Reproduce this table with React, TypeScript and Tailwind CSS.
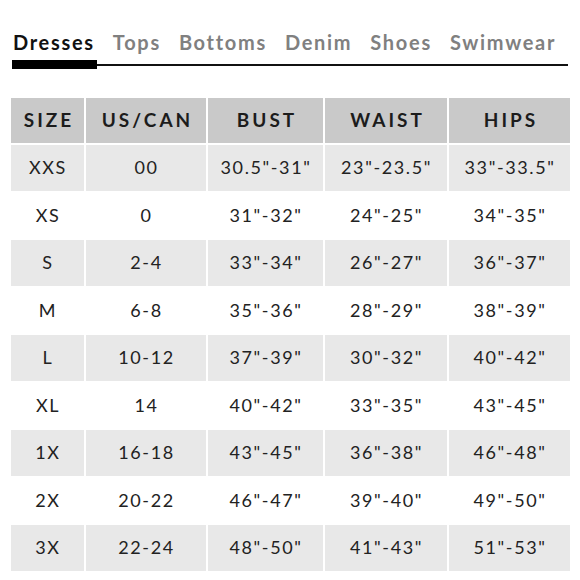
const tabs = ['Dresses', 'Tops', 'Bottoms', 'Denim', 'Shoes', 'Swimwear']

const headers = ['SIZE', 'US/CAN', 'BUST', 'WAIST', 'HIPS']

const rows = [
  ['XXS', '00', '30.5"-31"', '23"-23.5"', '33"-33.5"'],
  ['XS', '0', '31"-32"', '24"-25"', '34"-35"'],
  ['S', '2-4', '33"-34"', '26"-27"', '36"-37"'],
  ['M', '6-8', '35"-36"', '28"-29"', '38"-39"'],
  ['L', '10-12', '37"-39"', '30"-32"', '40"-42"'],
  ['XL', '14', '40"-42"', '33"-35"', '43"-45"'],
  ['1X', '16-18', '43"-45"', '36"-38"', '46"-48"'],
  ['2X', '20-22', '46"-47"', '39"-40"', '49"-50"'],
  ['3X', '22-24', '48"-50"', '41"-43"', '51"-53"'],
]

export default function App() {
  return (
    <div className="w-[580px] h-[580px] bg-white overflow-hidden font-['Lato','Liberation_Sans',sans-serif] text-[#222]">
      <div className="pl-[12px] pr-[12px] pt-[30px]">
        <div className="flex gap-[18px] text-[20px] font-bold leading-[24px] tracking-[1.7px] pl-[1px]">
          {tabs.map((t, i) => (
            <span key={t} className={i === 0 ? 'text-[#111]' : 'text-[#808080]'}>
              {t}
            </span>
          ))}
        </div>
        <div className="flex items-center mt-[6px]">
          <div className="w-[85px] h-[9px] bg-black" />
          <div className="flex-1 h-[2px] bg-[#111]" />
        </div>
      </div>

      <div className="ml-[11px] mt-[29px] grid grid-cols-[73px_120px_115px_122px_121px] gap-[2px]">
        {headers.map(h => (
          <div
            key={h}
            className="h-[45px] bg-[#c9c9c9] flex items-center justify-center pl-[3px] text-[19px] font-bold tracking-[3px] text-[#1c1c1c]"
          >
            {h}
          </div>
        ))}
        {rows.map((row, ri) =>
          row.map((cell, ci) => (
            <div
              key={ri + '-' + ci}
              className={
                'h-[45.5px] flex items-center justify-center pl-[1px] text-[18px] tracking-[1.6px] ' +
                (ri % 2 === 0 ? 'bg-[#e8e8e8]' : 'bg-white')
              }
            >
              {cell}
            </div>
          ))
        )}
      </div>
    </div>
  )
}
